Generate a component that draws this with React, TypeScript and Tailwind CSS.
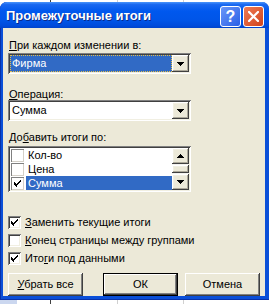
import React from 'react'

const sunken =
  'shadow-[inset_1px_1px_0_#808080,inset_-1px_-1px_0_#ffffff,inset_2px_2px_0_#404040,inset_-2px_-2px_0_#f1efe2]'
const raised =
  'shadow-[inset_-1px_-1px_0_#404040,inset_1px_1px_0_#ffffff,inset_-2px_-2px_0_#aca899,inset_2px_2px_0_#f1efe2]'

function Arrow({ up = false }: { up?: boolean }) {
  return (
    <svg width="7" height="4" viewBox="0 0 7 4" className={up ? 'rotate-180' : ''}>
      <path d="M0 0h7v1H0zM1 1h5v1H1zM2 2h3v1H2zM3 3h1v1H3z" fill="#000" />
    </svg>
  )
}

function Tick() {
  return (
    <svg width="7" height="7" viewBox="0 0 7 7">
      <path
        d="M6 0h1v1H6zM5 1h2v1H5zM0 2h1v1H0zM4 2h2v1H4zM0 3h2v1H0zM3 3h2v1H3zM0 4h4v1H0zM1 5h2v1H1zM2 6h1v1H2z"
        fill="#000"
      />
    </svg>
  )
}

function Combo({ value, focused }: { value: string; focused?: boolean }) {
  return (
    <div className={`w-[183px] h-[21px] bg-white p-[2px] flex ${sunken}`}>
      <div className="flex-1 flex items-center">
        {focused ? (
          <div className="w-full h-[17px] bg-[#316ac5] border border-dotted border-[#e3bd4c] text-white pl-[1px] leading-[15px]">
            {value}
          </div>
        ) : (
          <div className="pl-[2px] leading-[17px]">{value}</div>
        )}
      </div>
      <div className={`w-[17px] h-[17px] bg-[#ece9d8] flex items-center justify-center ${raised}`}>
        <Arrow />
      </div>
    </div>
  )
}

function Check({ checked, children }: { checked: boolean; children: React.ReactNode }) {
  return (
    <div className="flex items-center h-[13px]">
      <div className={`w-[13px] h-[13px] bg-white flex items-center justify-center ${sunken}`}>
        {checked && <Tick />}
      </div>
      <div className="ml-[4px] leading-[13px]">{children}</div>
    </div>
  )
}

function Btn({ children, def }: { children: React.ReactNode; def?: boolean }) {
  return (
    <div
      className={`w-[75px] h-[23px] bg-[#ece9d8] flex items-center justify-center ${
        def
          ? 'border border-black shadow-[inset_-1px_-1px_0_#404040,inset_1px_1px_0_#ffffff,inset_-2px_-2px_0_#808080]'
          : 'shadow-[inset_-1px_-1px_0_#404040,inset_1px_1px_0_#ffffff,inset_-2px_-2px_0_#808080]'
      }`}
    >
      {children}
    </div>
  )
}

const items = [
  { label: 'Кол-во', checked: false },
  { label: 'Цена', checked: false },
  { label: 'Сумма', checked: true, selected: true },
]

export default function App() {
  return (
    <div className="relative w-[269px] h-[304px] bg-white overflow-hidden font-['Liberation_Sans',Arial,sans-serif] text-[11px] text-black">
      {/* spreadsheet behind the dialog */}
      <div className="absolute left-0 bottom-0 w-[17px] h-[5px] bg-[#cbd7ef]" />
      <div className="absolute left-[50px] top-0 w-px h-full bg-[#404040]" />
      <div className="absolute left-[117px] top-0 w-px h-full bg-[#d0d0d0]" />
      <div className="absolute left-[183px] top-0 w-px h-full bg-[#d0d0d0]" />

      <div className="relative mt-[2px] w-[269px] h-[298px] rounded-t-[7px] bg-[#0a4fd8] shadow-[inset_1px_0_0_#0831a8,inset_0_-1px_0_#0831a8] flex flex-col overflow-hidden">
        {/* title bar */}
        <div className="h-[27px] flex items-center pl-[6px] pr-[5px] bg-[linear-gradient(to_bottom,#4a95fb_0%,#1a68f0_10%,#0058ee_35%,#0055e8_70%,#004cdc_90%,#0044cc_100%)]">
          <div className="flex-1 text-white font-bold text-[13px] [text-shadow:1px_1px_0_#0a2a8a] pt-[1px]">
            Промежуточные итоги
          </div>
          <div className="flex gap-[2px] mt-[3px]">
            <div className="w-[21px] h-[21px] rounded-[3px] border border-white bg-[linear-gradient(to_bottom_right,#6a97f8,#2a5fe6)] flex items-center justify-center text-white font-bold text-[16px] leading-none">
              ?
            </div>
            <div className="w-[21px] h-[21px] rounded-[3px] border border-white bg-[linear-gradient(to_bottom_right,#ef7b55,#d0441c)] flex items-center justify-center">
              <svg width="11" height="11" viewBox="0 0 11 11">
                <path d="M1 1L10 10M10 1L1 10" stroke="#fff" strokeWidth="2.2" strokeLinecap="square" />
              </svg>
            </div>
          </div>
        </div>

        {/* body */}
        <div className="flex-1 ml-[3px] mr-[4px] mb-[4px] bg-[#ece9d8] pl-[5px] flex flex-col">
          <div className="mt-[11px] h-[13px] leading-[13px] pl-[1px]">
            <span className="underline">П</span>ри каждом изменении в:
          </div>
          <div className="mt-[1px]">
            <Combo value="Фирма" focused />
          </div>

          <div className="mt-[14px] h-[13px] leading-[13px] pl-[1px]">
            <span className="underline">О</span>перация:
          </div>
          <div className="mt-[-1px]">
            <Combo value="Сумма" />
          </div>

          <div className="mt-[10px] h-[13px] leading-[13px] pl-[1px]">
            До<span className="underline">б</span>авить итоги по:
          </div>
          <div className={`mt-[2px] w-[183px] h-[46px] bg-white p-[2px] flex ${sunken}`}>
            <div className="flex-1 flex flex-col">
              {items.map((it) => (
                <div key={it.label} className="h-[14px] flex items-center pl-[1px]">
                  <div className="w-[13px] h-[13px] bg-white flex items-center justify-center shadow-[inset_1px_1px_0_#808080,inset_-1px_-1px_0_#d4d0c8]">
                    {it.checked && <Tick />}
                  </div>
                  <div
                    className={`ml-[2px] flex-1 h-[14px] leading-[14px] pl-[2px] ${
                      it.selected ? 'bg-[#316ac5] text-white' : ''
                    }`}
                  >
                    {it.label}
                  </div>
                </div>
              ))}
            </div>
            <div className="w-[17px] flex flex-col bg-[#f4f3ee]">
              <div className={`h-[16px] bg-[#ece9d8] flex items-center justify-center ${raised}`}>
                <Arrow up />
              </div>
              <div className="flex-1 py-[1px]">
                <div className={`h-[8px] bg-[#ece9d8] ${raised}`} />
              </div>
              <div className={`h-[16px] bg-[#ece9d8] flex items-center justify-center ${raised}`}>
                <Arrow />
              </div>
            </div>
          </div>

          <div className="mt-[24px] flex flex-col gap-[5px]">
            <Check checked>
              <span className="underline">З</span>аменить текущие итоги
            </Check>
            <Check checked={false}>
              <span className="underline">К</span>онец страницы между группами
            </Check>
            <Check checked>
              Ито<span className="underline">г</span>и под данными
            </Check>
          </div>

          <div className="mt-[8px] flex">
            <Btn>
              <span>
                <span className="underline">У</span>брать все
              </span>
            </Btn>
            <div className="ml-[20px]">
              <Btn def>ОК</Btn>
            </div>
            <div className="ml-[7px]">
              <Btn>Отмена</Btn>
            </div>
          </div>
        </div>
      </div>
    </div>
  )
}
